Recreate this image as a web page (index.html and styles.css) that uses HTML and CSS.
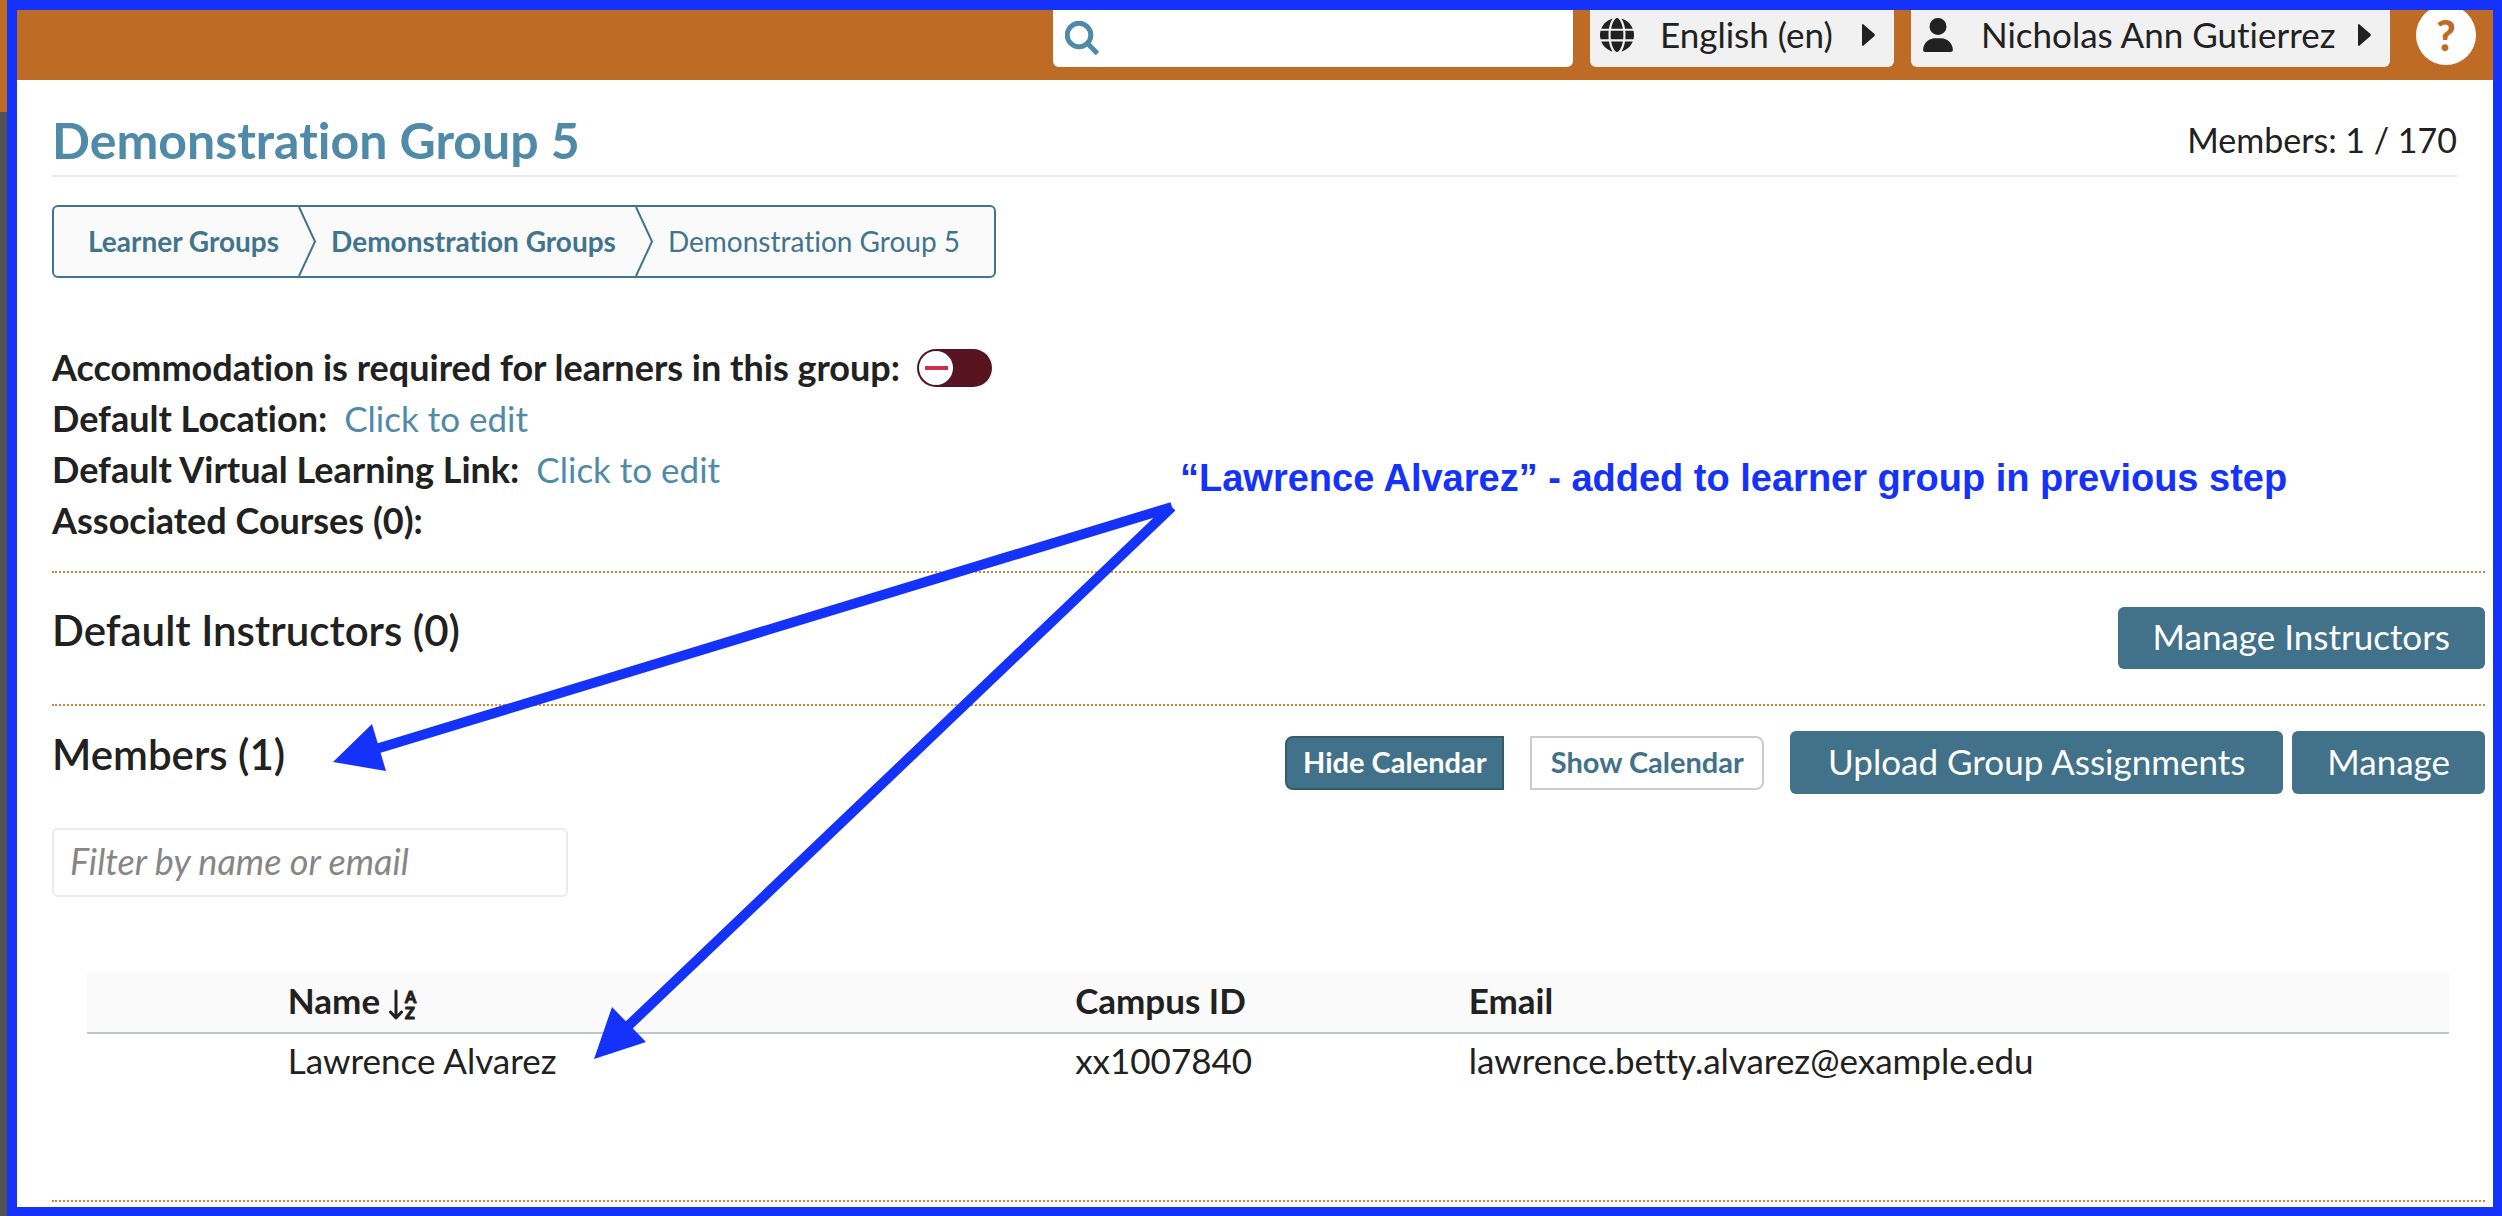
FILE: index.html
```html
<!DOCTYPE html>
<html lang="en">
<head>
<meta charset="utf-8">
<meta name="viewport" content="width=device-width, initial-scale=1">
<title>Demonstration Group 5</title>
<link rel="stylesheet" href="styles.css">
</head>
<body>
<div class="sidebar-edge"></div>
<div class="frame">
  <header class="topbar">
    <label class="search">
      <svg class="search-icon" viewBox="0 0 34 34" aria-hidden="true"><circle cx="14" cy="14" r="11.8"/><path d="M22.500 22.500 32.500 32.500"/></svg>
      <input type="search" aria-label="Search">
    </label>
    <button class="menu-button language" type="button">
      <svg class="menu-icon" viewBox="0 0 512 512" aria-hidden="true"><path d="M352 256c0 22-1 44-3 64H163c-2-20-3-42-3-64s1-44 3-64h186c2 20 3 42 3 64zm29-64h123c5 20 8 42 8 64s-3 44-8 64H381c2-21 3-42 3-64s-1-43-3-64zm112-32H377C367 96 347 43 321 8c79 21 143 78 172 152zm-149 0H168c6-36 15-68 27-94 10-24 22-41 33-52 11-11 21-14 28-14s17 3 28 14c11 11 23 28 33 52 12 26 21 58 27 94zm-209 0H19C48 86 112 29 191 8c-26 35-46 88-56 152zM8 192h123c-2 21-3 42-3 64s1 43 3 64H8c-5-20-8-42-8-64s3-44 8-64zm187 254c-12-26-21-58-27-94h176c-6 36-15 68-27 94-10 24-22 41-33 52-11 11-21 14-28 14s-17-3-28-14c-11-11-23-28-33-52zM135 352c10 64 30 117 56 152-79-21-143-78-172-152h116zm358 0c-29 74-93 131-172 152 26-35 46-88 56-152h116z"/></svg>
      <span>English (en)</span>
      <svg class="caret" viewBox="0 0 13 22" aria-hidden="true"><path d="M1 0Q0 0 0 1V21Q0 22 1 22L12.500 12Q13 11 12.500 10Z"/></svg>
    </button>
    <button class="menu-button user" type="button">
      <svg class="menu-icon" viewBox="-32 0 512 512" aria-hidden="true"><path d="M224 256a128 128 0 1 0 0-256 128 128 0 1 0 0 256zm-46 48C80 304 0 384 0 482c0 16 13 30 30 30h388c17 0 30-14 30-30 0-98-80-178-178-178h-92z"/></svg>
      <span>Nicholas Ann Gutierrez</span>
      <svg class="caret" viewBox="0 0 13 22" aria-hidden="true"><path d="M1 0Q0 0 0 1V21Q0 22 1 22L12.500 12Q13 11 12.500 10Z"/></svg>
    </button>
    <button class="help" type="button" aria-label="Help">?</button>
  </header>

  <main class="content">
    <div class="title-row">
      <h1>Demonstration Group 5</h1>
      <p>Members: 1 / 170</p>
    </div>

    <nav aria-label="Breadcrumb">
      <ol class="breadcrumb">
        <li><a href="#">Learner Groups</a><svg viewBox="0 0 18 69" preserveAspectRatio="none" aria-hidden="true"><path d="M1 0 17 34.500 1 69"/></svg></li>
        <li><a href="#">Demonstration Groups</a><svg viewBox="0 0 18 69" preserveAspectRatio="none" aria-hidden="true"><path d="M1 0 17 34.500 1 69"/></svg></li>
        <li aria-current="page">Demonstration Group 5</li>
      </ol>
    </nav>

    <div class="info">
      <div class="info-row">
        <label for="accommodation">Accommodation is required for learners in this group:</label>
        <input id="accommodation" class="toggle" type="checkbox" role="switch">
      </div>
      <div class="info-row"><b>Default Location:</b> <button type="button">Click to edit</button></div>
      <div class="info-row"><b>Default Virtual Learning Link:</b> <button type="button">Click to edit</button></div>
      <div class="info-row"><b>Associated Courses (0):</b></div>
    </div>

    <section class="instructors">
      <div class="section-head">
        <h2>Default Instructors (0)</h2>
        <button class="action" type="button">Manage Instructors</button>
      </div>
    </section>

    <section class="members">
      <div class="section-head">
        <h2>Members (1)</h2>
        <div class="actions">
          <div class="calendar-toggle">
            <button class="hide-calendar" type="button" aria-pressed="true">Hide Calendar</button>
            <button class="show-calendar" type="button" aria-pressed="false">Show Calendar</button>
          </div>
          <div class="member-actions">
            <button class="action upload" type="button">Upload Group Assignments</button>
            <button class="action" type="button">Manage</button>
          </div>
        </div>
      </div>
      <input class="filter" type="text" placeholder="Filter by name or email" aria-label="Filter by name or email">
      <table>
        <colgroup><col class="col-1"><col class="col-4"><col class="col-2"><col class="col-5"></colgroup>
        <thead>
          <tr>
            <td></td>
            <th scope="col">Name <svg class="sort" viewBox="0 0 29 34" aria-hidden="true"><path d="M7 3V29M1.500 24 7 30 12.500 24"/><text x="16" y="15">A</text><text x="16" y="31">Z</text></svg></th>
            <th scope="col">Campus ID</th>
            <th scope="col">Email</th>
          </tr>
        </thead>
        <tbody>
          <tr><td></td><td>Lawrence Alvarez</td><td>xx1007840</td><td>lawrence.betty.alvarez@example.edu</td></tr>
        </tbody>
      </table>
    </section>
    <hr>
  </main>
</div>

<p class="note">“Lawrence Alvarez” - added to learner group in previous step</p>
<svg class="arrows" viewBox="0 0 1200 1080" aria-hidden="true">
  <path class="shaft" d="M1172 507 376 749M1172 507 626 1028"/>
  <path class="head" d="M333 762 372 724 386 771ZM594 1059 612 1007 646 1042Z"/>
</svg>
</body>
</html>
```
FILE: styles.css
```css
* {
  box-sizing: border-box;
}

body {
  position: relative;
  display: flex;
  min-height: 100vh;
  margin: 0;
  background: #fff;
  color: #212121;
  font: 35px/51px Lato, "Noto Sans", sans-serif;
  font-variant-ligatures: none;
}

h1, h2, p, ol {
  margin: 0;
  padding: 0;
}

button, input {
  margin: 0;
  font: inherit;
  font-variant-ligatures: none;
  color: inherit;
}

a {
  color: inherit;
  text-decoration: none;
}

.sidebar-edge {
  width: 7px;
  background: linear-gradient(#be6b26 112px, #535353 112px);
}

.frame {
  flex: 1;
  min-width: 0;
  border: solid #1432fa;
  border-width: 10px 9px 9px 10px;
}

/* Top bar */
.topbar {
  display: flex;
  justify-content: flex-end;
  gap: 17px;
  height: 70px;
  padding-right: 17px;
  overflow: hidden;
  background: #be6b26;
}

.topbar > * {
  height: 65px;
  margin-top: -8px;
}

.search {
  display: flex;
  align-items: center;
  width: 520px;
  padding: 6px 12px 0;
  border-radius: 6px;
  background: #fff;
}

.search-icon {
  width: 34px;
  height: 34px;
  fill: none;
  stroke: #4f8aa8;
  stroke-width: 5;
}

.search input {
  flex: 1;
  min-width: 0;
  border: 0;
  outline: 0;
  background: none;
}

.menu-button {
  display: flex;
  align-items: center;
  padding: 0 19px 0 10px;
  border: 0;
  border-radius: 6px;
  background: #f1f1f1;
}

.language {
  min-width: 304px;
}

.user {
  min-width: 479px;
}

.menu-button span {
  flex: 1;
  margin: 0 20px 0 26px;
  text-align: left;
}

.menu-icon {
  width: 34px;
  height: 34px;
  fill: #212121;
}

.caret {
  width: 13px;
  height: 22px;
  fill: #212121;
}

.topbar .help {
  width: 60px;
  height: 60px;
  margin: -5px 0 0 9px;
  padding: 0;
  border: 0;
  border-radius: 50%;
  background: #fff;
  color: #be6b26;
  font-size: 42px;
  font-weight: 900;
}

/* Page content */
.content {
  padding: 25px 8px 5px 35px;
}

.title-row {
  display: flex;
  justify-content: space-between;
  align-items: center;
  margin-right: 28px;
  border-bottom: 2px solid #e8ebeb;
  line-height: 70px;
}

.title-row p {
  font-size: 34px;
}

h1 {
  color: #4f8aa8;
  font-size: 50px;
  font-weight: 700;
}

.breadcrumb {
  display: flex;
  width: fit-content;
  height: 73px;
  margin-top: 28px;
  padding: 0 34px;
  border: 2px solid #41748d;
  border-radius: 6px;
  background: #fafafa;
  color: #41748d;
  font-size: 28px;
  line-height: 69px;
  list-style: none;
}

.breadcrumb li {
  display: flex;
}

.breadcrumb a {
  font-weight: 700;
}

.breadcrumb svg {
  width: 18px;
  height: 69px;
  margin: 0 15px 0 19px;
  fill: none;
  stroke: #41748d;
  stroke-width: 2;
}

.info {
  margin: 64px 0 25px;
}

.info-row {
  display: flex;
  align-items: center;
  gap: 17px;
  height: 51px;
}

.info-row label,
.info-row b {
  font-size: 36px;
  font-weight: 700;
}

.info-row button {
  padding: 0;
  border: 0;
  background: none;
  color: #4f8aa8;
}

.toggle {
  appearance: none;
  display: flex;
  align-items: center;
  width: 75px;
  height: 38px;
  padding: 2px;
  border-radius: 19px;
  background: #57131f;
}

.toggle::before {
  content: "";
  width: 34px;
  height: 34px;
  border-radius: 50%;
  background: linear-gradient(#cc2f4b, #cc2f4b) center / 23px 4px no-repeat #fff;
}

section, hr {
  border: 0;
  border-top: 2px dotted #c8843c;
}

hr {
  margin: 0;
}

.section-head {
  display: flex;
  justify-content: space-between;
  align-items: flex-start;
}

.instructors {
  padding: 34px 0 35px;
}

.members {
  padding: 25px 0 114px;
}

h2 {
  font-size: 42px;
  font-weight: 600;
  line-height: 46px;
}

.action {
  height: 63px;
  padding: 0 35px 3px;
  border: 0;
  border-radius: 6px;
  background: #41728a;
  color: #fff;
}

.instructors .action {
  height: 62px;
}

.upload {
  min-width: 493px;
}

.actions {
  display: flex;
  align-items: center;
  gap: 26px;
}

.calendar-toggle {
  display: flex;
  gap: 26px;
}

.calendar-toggle button {
  height: 54px;
  padding: 0 14px 2px;
  border: 2px solid #ccc;
  border-radius: 0 8px 8px 0;
  background: #fff;
  color: #41728a;
  font-size: 29px;
  font-weight: 700;
  line-height: 48px;
}

.calendar-toggle .show-calendar {
  min-width: 234px;
}

.calendar-toggle .hide-calendar {
  min-width: 219px;
  border-color: #335a6d;
  border-radius: 8px 0 0 8px;
  background: #41728a;
  color: #fff;
}

.member-actions {
  display: flex;
  gap: 9px;
}

.filter {
  display: block;
  width: 516px;
  height: 69px;
  margin-top: 34px;
  padding: 0 16px 4px;
  border: 2px solid #e8ecea;
  border-radius: 6px;
  font-size: 36px;
}

.filter::placeholder {
  color: #868686;
  font-style: italic;
}

table {
  width: calc(100% - 71px);
  margin: 75px 36px 0 35px;
  border-collapse: collapse;
  table-layout: fixed;
}

.col-1 { width: 8.333%; }
.col-4 { width: 33.333%; }
.col-2 { width: 16.667%; }
.col-5 { width: 41.667%; }

th, td {
  height: 53px;
  padding: 0 4px;
  text-align: left;
}

thead th, thead td {
  height: 61px;
  padding-bottom: 4px;
  border-bottom: 2px solid #bfc6ca;
  background: #fafafa;
  font-weight: 700;
}

.sort {
  width: 29px;
  height: 34px;
  vertical-align: middle;
  fill: none;
  stroke: #212121;
  stroke-width: 3;
  stroke-linecap: round;
  stroke-linejoin: round;
}

.sort text {
  fill: #212121;
  stroke-width: 1;
  font-size: 16px;
  font-weight: 900;
}

/* Annotation drawn over the page */
.note {
  position: absolute;
  top: 453px;
  left: 1180px;
  color: #1432fa;
  font: bold 38px/50px "Liberation Sans", Arial, sans-serif;
  white-space: nowrap;
}

.arrows {
  position: absolute;
  top: 0;
  left: 0;
  width: 1200px;
  height: 1080px;
  pointer-events: none;
}

.shaft {
  fill: none;
  stroke: #1432fa;
  stroke-width: 10;
}

.head {
  fill: #1432fa;
}
```
